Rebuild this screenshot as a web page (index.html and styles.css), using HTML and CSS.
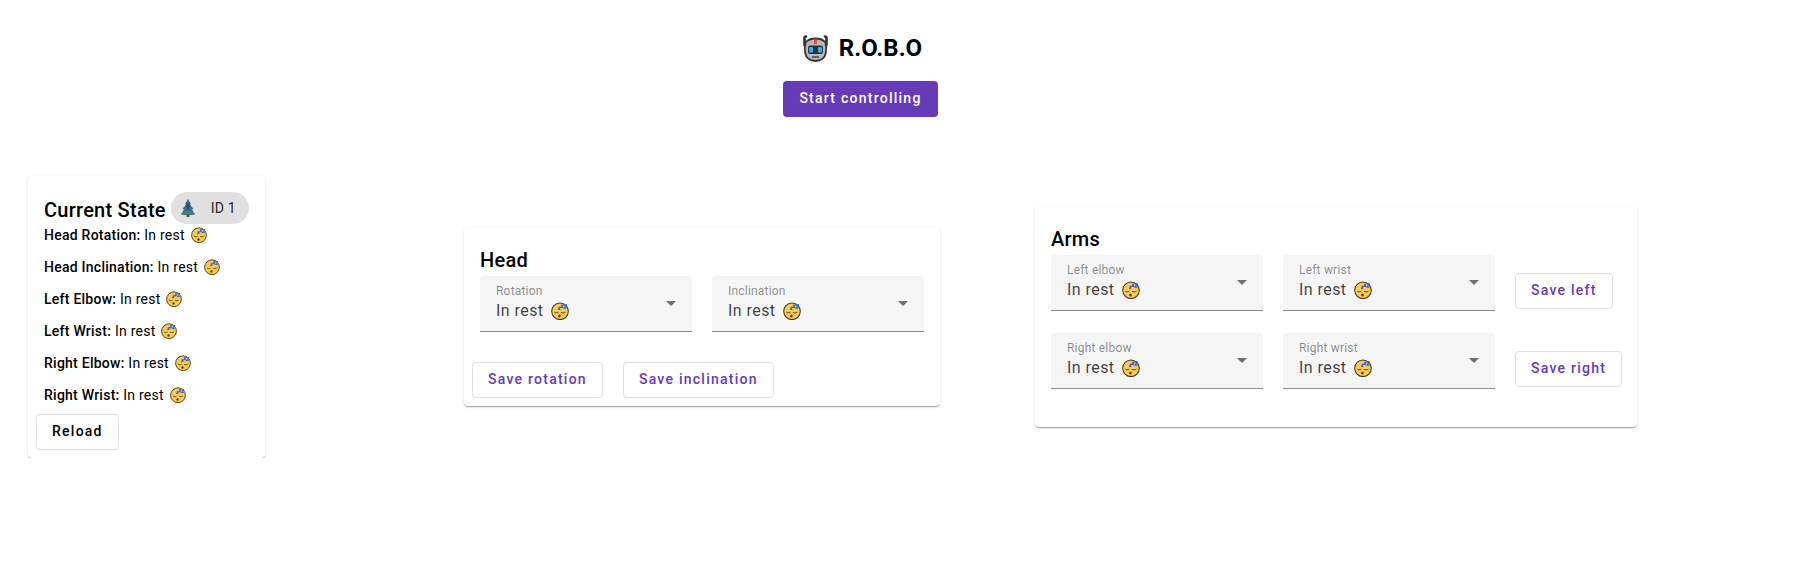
FILE: index.html
```html
<!DOCTYPE html>
<html lang="en">
    <head>
        <meta charset="UTF-8">
        <title>R.O.B.O</title>
        <link rel="stylesheet" href="styles.css">
    </head>
    <body>
        <!-- Shared icons -->
        <svg class="sprite" xmlns="http://www.w3.org/2000/svg">
            <symbol id="sleep" viewBox="0 0 32 32">
                <circle cx="16" cy="16.500" r="14.800" fill="#fcc84e" stroke="#3b362c" stroke-width="1.800"/>
                <path d="M6.500 18.500c1.500 1.200 4 1.200 6 .2M18.500 18.700c2 1 4.500 1 6.500-.2" fill="none" stroke="#3b362c" stroke-width="1.600" stroke-linecap="round"/>
                <ellipse cx="15" cy="25" rx="2.200" ry="2.500" fill="#3b362c"/>
                <path d="M13.500 9.500h3l-3 3.500h3M18 5.500h3.500l-3.500 4h3.500M23 5h4.500l-4.500 6h4.500" fill="none" stroke="#2f66e0" stroke-width="2.400" stroke-linejoin="round"/>
            </symbol>
        </svg>

        <header class="top">
            <h1 class="brand">
                <svg class="robo" viewBox="0 0 27 27">
                    <path d="M2.500 10V3c0-1 .5-1.500 1.500-1.500M24.500 10V3c0-1-.5-1.500-1.500-1.500" fill="none" stroke="#333" stroke-width="2.600" stroke-linecap="round"/>
                    <path d="M3.500 7.500C6 4.500 9.500 3.500 13.500 3.500s7.500 1 10 4c.8 3 .8 7.500.3 10.500-.8 4.800-4.800 8-10.300 8S4 22.800 3.200 18c-.5-3-.5-7.500.3-10.500z" fill="#b8b8b8" stroke="#333" stroke-width="1.800"/>
                    <rect x="12" y="5" width="3" height="4" fill="#e2512c"/>
                    <rect x="6" y="10.500" width="15" height="8.500" rx="2" fill="#2c3138"/>
                    <rect x="7" y="12" width="4" height="5.500" rx="1" fill="#2ab4ee"/>
                    <rect x="16" y="12" width="4" height="5.500" rx="1" fill="#2ab4ee"/>
                    <path d="M10 22h7" stroke="#444" stroke-width="1.500"/>
                </svg>
                <span>R.O.B.O</span>
            </h1>
            <button class="btn btn-primary">Start controlling</button>
        </header>

        <main class="board">
            <section class="card card-state">
                <div class="state-head">
                    <h2 class="card-title">Current State</h2>
                    <span class="chip">
                        <svg class="tree" viewBox="0 0 16 18">
                            <path d="M8 0l3 5-1 .5 3.500 4.500-1.500.5 3 5-4 .5H5l-4-.5 3-5L2.500 10 6 5.500 5 5z" fill="#3d6f8e"/>
                            <path d="M8 3l2 4-2 5-2-5z" fill="#274b63"/>
                            <path d="M5 12l3 2 3-2v3H5z" fill="#2f9a83"/>
                            <rect x="6.500" y="15.500" width="3" height="2.500" fill="#5d5048"/>
                        </svg>
                        <span>ID 1</span>
                    </span>
                </div>
                <div class="state-list">
                    <p><b>Head Rotation:</b> In rest <svg class="emoji"><use href="#sleep"/></svg></p>
                    <p><b>Head Inclination:</b> In rest <svg class="emoji"><use href="#sleep"/></svg></p>
                    <p><b>Left Elbow:</b> In rest <svg class="emoji"><use href="#sleep"/></svg></p>
                    <p><b>Left Wrist:</b> In rest <svg class="emoji"><use href="#sleep"/></svg></p>
                    <p><b>Right Elbow:</b> In rest <svg class="emoji"><use href="#sleep"/></svg></p>
                    <p><b>Right Wrist:</b> In rest <svg class="emoji"><use href="#sleep"/></svg></p>
                </div>
                <div class="state-actions">
                    <button class="btn btn-plain">Reload</button>
                </div>
            </section>

            <section class="card card-head">
                <h2 class="card-title">Head</h2>
                <div class="row">
                    <div class="select">
                        <label>Rotation</label>
                        <div class="select-value">In rest <svg class="emoji-lg"><use href="#sleep"/></svg></div>
                        <i class="arrow"></i>
                    </div>
                    <div class="select">
                        <label>Inclination</label>
                        <div class="select-value">In rest <svg class="emoji-lg"><use href="#sleep"/></svg></div>
                        <i class="arrow"></i>
                    </div>
                </div>
                <div class="head-actions">
                    <button class="btn btn-outline">Save rotation</button>
                    <button class="btn btn-outline">Save inclination</button>
                </div>
            </section>

            <section class="card card-arms">
                <h2 class="card-title">Arms</h2>
                <div class="row arm-row">
                    <div class="select">
                        <label>Left elbow</label>
                        <div class="select-value">In rest <svg class="emoji-lg"><use href="#sleep"/></svg></div>
                        <i class="arrow"></i>
                    </div>
                    <div class="select">
                        <label>Left wrist</label>
                        <div class="select-value">In rest <svg class="emoji-lg"><use href="#sleep"/></svg></div>
                        <i class="arrow"></i>
                    </div>
                    <button class="btn btn-outline">Save left</button>
                </div>
                <div class="row arm-row">
                    <div class="select">
                        <label>Right elbow</label>
                        <div class="select-value">In rest <svg class="emoji-lg"><use href="#sleep"/></svg></div>
                        <i class="arrow"></i>
                    </div>
                    <div class="select">
                        <label>Right wrist</label>
                        <div class="select-value">In rest <svg class="emoji-lg"><use href="#sleep"/></svg></div>
                        <i class="arrow"></i>
                    </div>
                    <button class="btn btn-outline">Save right</button>
                </div>
            </section>
        </main>
    </body>
</html>
```

FILE: styles.css
```css
body {
    font-family: Roboto, 'Liberation Sans', sans-serif;
    margin: 0;
    background-color: #fff;
    color: #000;
}
.sprite {
    display: none;
}
.top {
    display: flex;
    flex-direction: column;
    align-items: center;
    padding: 32px 77px 0 0;
}
.brand {
    display: flex;
    align-items: center;
    gap: 10px;
    margin: 0 0 17px 3px;
    font-size: 24px;
    font-weight: 700;
    line-height: 32px;
}
.robo {
    width: 27px;
    height: 27px;
}
.btn {
    height: 36px;
    padding: 0 15px 2px;
    font-family: inherit;
    font-size: 14px;
    font-weight: 500;
    letter-spacing: 1.25px;
    white-space: nowrap;
    border-radius: 4px;
    background-color: #fff;
    cursor: pointer;
    box-sizing: border-box;
}
.btn-primary {
    padding: 0 16px 2px;
    border: none;
    background-color: #673ab7;
    color: #fff;
}
.btn-plain {
    border: 1px solid #e0e0e0;
    color: #000;
}
.btn-outline {
    border: 1px solid #e0e0e0;
    color: #673ab7;
}
.board {
    display: flex;
    align-items: center;
    margin-top: 59px;
    padding-left: 28px;
}
.card {
    background-color: #fff;
    border-radius: 4px;
    box-shadow: 0 2px 1px -1px rgba(0,0,0,0.2), 0 1px 1px 0 rgba(0,0,0,0.14), 0 1px 3px 0 rgba(0,0,0,0.12);
    box-sizing: border-box;
}
.card-state {
    width: 237px;
    padding: 16px 16px 8px;
}
.card-head {
    width: 476px;
    margin-left: 199px;
    padding: 16px 16px 8px;
}
.card-arms {
    width: 602px;
    margin-left: 95px;
    padding: 16px 16px 16px;
}
.card-title {
    margin: 0;
    font-size: 20px;
    font-weight: 500;
    line-height: 32px;
    letter-spacing: .25px;
}
.state-head {
    display: flex;
    justify-content: space-between;
    align-items: center;
}
.state-head .card-title {
    padding-top: 4px;
    line-height: 28px;
}
.chip {
    display: flex;
    align-items: center;
    gap: 15px;
    height: 32px;
    padding: 0 13px 0 9px;
    border-radius: 16px;
    background-color: #e0e0e0;
    font-size: 14px;
    letter-spacing: .25px;
    color: rgba(0,0,0,0.87);
}
.tree {
    width: 16px;
    height: 18px;
}
.state-list {
    margin-top: 1px;
}
.state-list p {
    margin: 0 0 12px;
    font-size: 14px;
    line-height: 20px;
    letter-spacing: .25px;
    white-space: nowrap;
}
.state-list p:last-child {
    margin-bottom: 0;
}
.state-list b {
    font-weight: 500;
}
.emoji {
    width: 16px;
    height: 16px;
    margin-left: 2px;
    vertical-align: -3px;
}
.state-actions {
    margin: 9px 0 0 -8px;
}
.row {
    display: flex;
    gap: 20px;
}
.select {
    position: relative;
    flex: none;
    width: 212px;
    height: 56px;
    padding: 8px 16px 0;
    background-color: #f5f5f5;
    border-bottom: 1px solid #8c8c8c;
    border-radius: 4px 4px 0 0;
    box-sizing: border-box;
}
.select label {
    display: block;
    font-size: 12px;
    line-height: 14px;
    letter-spacing: .2px;
    color: rgba(0,0,0,0.45);
}
.select-value {
    display: flex;
    align-items: center;
    gap: 7px;
    font-size: 16px;
    line-height: 24px;
    letter-spacing: .45px;
    color: rgba(0,0,0,0.76);
    margin-top: 1px;
}
.emoji-lg {
    width: 18px;
    height: 18px;
}
.arrow {
    position: absolute;
    top: 25px;
    right: 16px;
    border-left: 5px solid transparent;
    border-right: 5px solid transparent;
    border-top: 5px solid rgba(0,0,0,0.54);
}
.head-actions {
    display: flex;
    gap: 20px;
    margin: 30px 0 0 -8px;
}
.arm-row {
    margin-bottom: 22px;
}
.arm-row .btn {
    flex: none;
    margin-top: 18px;
}
```
